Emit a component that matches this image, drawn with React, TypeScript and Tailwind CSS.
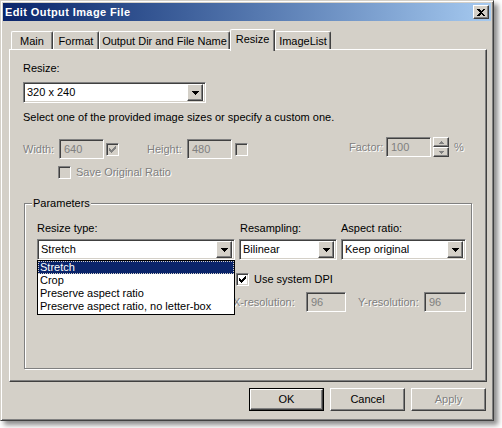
import React from 'react';

const disabledText = "text-[#808080] [text-shadow:1px_1px_0_#ffffff] whitespace-nowrap";

const Arrow = ({ color = '#000' }: { color?: string }) => (
  <svg width="7" height="4" viewBox="0 0 7 4" shapeRendering="crispEdges">
    <rect x="0" y="0" width="7" height="1" fill={color} />
    <rect x="1" y="1" width="5" height="1" fill={color} />
    <rect x="2" y="2" width="3" height="1" fill={color} />
    <rect x="3" y="3" width="1" height="1" fill={color} />
  </svg>
);

const CHECK = ['......X', '.....XX', 'X...XXX', 'XX.XXX.', 'XXXXX..', '.XXX...', '..X....'];

const CheckMark = ({ color = '#000' }: { color?: string }) => (
  <svg width="7" height="7" viewBox="0 0 7 7" shapeRendering="crispEdges">
    {CHECK.map((row, y) =>
      row.split('').map((c, x) => (c === 'X' ? <rect key={`${x}-${y}`} x={x} y={y} width="1" height="1" fill={color} /> : null))
    )}
  </svg>
);

const sunken =
  'border border-t-[#808080] border-l-[#808080] border-b-white border-r-white shadow-[inset_1px_1px_0_#404040,inset_-1px_-1px_0_#d4d0c8]';
const raised =
  'border border-t-white border-l-white border-b-[#404040] border-r-[#404040] shadow-[inset_-1px_-1px_0_#808080]';

const Checkbox = ({ checked, disabled }: { checked?: boolean; disabled?: boolean }) => (
  <div className={`w-[13px] h-[13px] shrink-0 flex items-center justify-center ${sunken} ${disabled ? 'bg-[#d4d0c8]' : 'bg-white'}`}>
    {checked && <CheckMark color={disabled ? '#808080' : '#000'} />}
  </div>
);

const Combo = ({ value, width }: { value: string; width: number }) => (
  <div className={`h-[21px] bg-white flex items-center p-[2px] ${sunken}`} style={{ width }}>
    <span className="flex-1 pl-[1px] leading-[13px] whitespace-nowrap overflow-hidden">{value}</span>
    <div className={`w-[16px] h-[17px] bg-[#d4d0c8] flex items-center justify-center ${raised}`}>
      <Arrow />
    </div>
  </div>
);

const Field = ({ value, width }: { value: string; width: number }) => (
  <div className={`h-[20px] shrink-0 bg-[#d4d0c8] flex items-center pl-[4px] text-[#808080] ${sunken}`} style={{ width }}>
    {value}
  </div>
);

const Button = ({ label, isDefault, disabled }: { label: string; isDefault?: boolean; disabled?: boolean }) => (
  <div className={`w-[75px] h-[23px] ${isDefault ? 'border border-black' : ''}`}>
    <div className={`w-full h-full flex items-center justify-center ${raised} ${disabled ? disabledText : 'text-black'}`}>
      {label}
    </div>
  </div>
);

const tabs = ['Main', 'Format', 'Output Dir and File Name', 'Resize', 'ImageList'];
const tabWidths = [42, 46, 131, 45, 56];

export default function App() {
  return (
    <div className="w-[502px] h-[428px] bg-white font-['Liberation_Sans',Arial,sans-serif] text-[11px] leading-[13px] text-black overflow-hidden">
      <div className="w-[494px] h-[421px] bg-[#d4d0c8] border border-t-[#d4d0c8] border-l-[#d4d0c8] border-r-[#404040] border-b-[#404040] shadow-[inset_1px_1px_0_#fff,inset_-1px_-1px_0_#808080,4px_4px_5px_rgba(0,0,0,0.45)] p-[2px] flex flex-col">
        {/* title bar */}
        <div className="h-[18px] bg-linear-to-r from-[#0a246a] to-[#a6caf0] flex items-center justify-between pl-[2px] pr-[2px]">
          <span className="text-white font-bold text-[11px] tracking-[0.4px] whitespace-nowrap">Edit Output Image File</span>
          <div className={`w-[16px] h-[14px] bg-[#d4d0c8] flex items-center justify-center ${raised}`}>
            <svg width="8" height="7" viewBox="0 0 8 7" shapeRendering="crispEdges">
              <path d="M0 0h2l2 2 2-2h2v1L5 3.5 8 6v1H6L4 5 2 7H0V6l3-2.5L0 1z" fill="#000" />
            </svg>
          </div>
        </div>

        {/* tabs */}
        <div className="mt-[8px] h-[20px] flex items-end pl-[8px] relative z-10">
          {tabs.map((t, i) =>
            t === 'Resize' ? (
              <div
                key={t}
                className="h-[22px] -mb-[2px] bg-[#d4d0c8] border-l border-t border-white border-r border-r-[#404040] rounded-t-[2px] shadow-[inset_-1px_0_0_#808080] flex items-start justify-center pt-[3px] whitespace-nowrap"
                style={{ width: tabWidths[i] }}
              >
                {t}
              </div>
            ) : (
              <div
                key={t}
                className="h-[18px] bg-[#d4d0c8] border-l border-t border-white border-r border-r-[#404040] rounded-t-[2px] shadow-[inset_-1px_0_0_#808080] flex items-center justify-center pt-[2px] whitespace-nowrap"
                style={{ width: tabWidths[i] }}
              >
                {t}
              </div>
            )
          )}
        </div>

        {/* panel */}
        <div className="ml-[6px] w-[478px] h-[333px] border border-t-white border-l-white border-r-[#404040] border-b-[#404040] shadow-[inset_-1px_-1px_0_#808080] pl-[13px] pt-[12px] flex flex-col">
          <div>Resize:</div>
          <div className="mt-[7px]">
            <Combo value="320 x 240" width={183} />
          </div>
          <div className="mt-[8px] whitespace-nowrap">Select one of the provided image sizes or specify a custom one.</div>

          <div className="mt-[12px] h-[23px] flex items-start">
            <div className="mt-[3px] flex items-center">
              <span className={`${disabledText} w-[36px]`}>Width:</span>
              <Field value="640" width={45} />
              <div className="ml-[2px]">
                <Checkbox checked disabled />
              </div>
              <span className={`${disabledText} ml-[28px] w-[40px]`}>Height:</span>
              <Field value="480" width={45} />
              <div className="ml-[3px]">
                <Checkbox disabled />
              </div>
            </div>
            <div className="ml-[101px] mt-[1px] flex items-center">
              <span className={`${disabledText} w-[37px]`}>Factor:</span>
              <Field value="100" width={45} />
              <div className="ml-[2px] w-[16px] h-[20px] flex flex-col">
                <div className={`h-[10px] bg-[#d4d0c8] flex items-center justify-center ${raised}`}>
                  <svg width="5" height="3" viewBox="0 0 5 3" shapeRendering="crispEdges">
                    <rect x="2" y="0" width="1" height="1" fill="#808080" />
                    <rect x="1" y="1" width="3" height="1" fill="#808080" />
                    <rect x="0" y="2" width="5" height="1" fill="#808080" />
                  </svg>
                </div>
                <div className={`h-[10px] bg-[#d4d0c8] flex items-center justify-center ${raised}`}>
                  <svg width="5" height="3" viewBox="0 0 5 3" shapeRendering="crispEdges">
                    <rect x="0" y="0" width="5" height="1" fill="#808080" />
                    <rect x="1" y="1" width="3" height="1" fill="#808080" />
                    <rect x="2" y="2" width="1" height="1" fill="#808080" />
                  </svg>
                </div>
              </div>
              <span className={`${disabledText} ml-[5px]`}>%</span>
            </div>
          </div>

          <div className="mt-[7px] ml-[35px] flex items-center gap-[5px]">
            <Checkbox disabled />
            <span className={disabledText}>Save Original Ratio</span>
          </div>

          {/* Parameters group */}
          <div className="mt-[24px] ml-[1px] w-[448px] h-[166px] border border-[#808080] shadow-[1px_1px_0_#fff,inset_1px_1px_0_#fff] relative pl-[12px] pt-[18px]">
            <span className="absolute -top-[7px] left-[7px] bg-[#d4d0c8] px-[1px] whitespace-nowrap">Parameters</span>
            <div className="flex gap-[4px]">
              <div className="w-[198px]">
                <div>Resize type:</div>
                <div className="mt-[4px] relative">
                  <Combo value="Stretch" width={198} />
                  <div className="absolute left-0 top-[21px] w-[198px] bg-white border border-black z-20 pb-[1px]">
                    <div className="h-[13px] bg-[#0a246a] text-white pl-[2px] outline outline-1 outline-dotted outline-[#d4d0c8] -outline-offset-1 leading-[13px]">Stretch</div>
                    <div className="h-[13px] pl-[2px] leading-[13px]">Crop</div>
                    <div className="h-[13px] pl-[2px] leading-[13px]">Preserve aspect ratio</div>
                    <div className="h-[13px] pl-[2px] leading-[13px] whitespace-nowrap overflow-hidden">Preserve aspect ratio, no letter-box</div>
                  </div>
                </div>
              </div>
              <div className="w-[98px]">
                <div className="pl-[1px] whitespace-nowrap">Resampling:</div>
                <div className="mt-[4px]">
                  <Combo value="Bilinear" width={98} />
                </div>
              </div>
              <div className="w-[125px]">
                <div className="whitespace-nowrap">Aspect ratio:</div>
                <div className="mt-[4px]">
                  <Combo value="Keep original" width={125} />
                </div>
              </div>
            </div>
            <div className="mt-[13px] ml-[199px] flex items-center gap-[5px]">
              <Checkbox checked />
              <span className="whitespace-nowrap">Use system DPI</span>
            </div>
            <div className="mt-[6px] ml-[196px] flex items-center">
              <span className={`${disabledText} w-[73px]`}>X-resolution:</span>
              <Field value="96" width={40} />
              <span className={`${disabledText} ml-[12px] w-[66px]`}>Y-resolution:</span>
              <Field value="96" width={42} />
            </div>
          </div>
        </div>

        {/* buttons */}
        <div className="mt-[6px] flex justify-end gap-[6px] pr-[5px]">
          <Button label="OK" isDefault />
          <Button label="Cancel" />
          <Button label="Apply" disabled />
        </div>
      </div>
    </div>
  );
}
